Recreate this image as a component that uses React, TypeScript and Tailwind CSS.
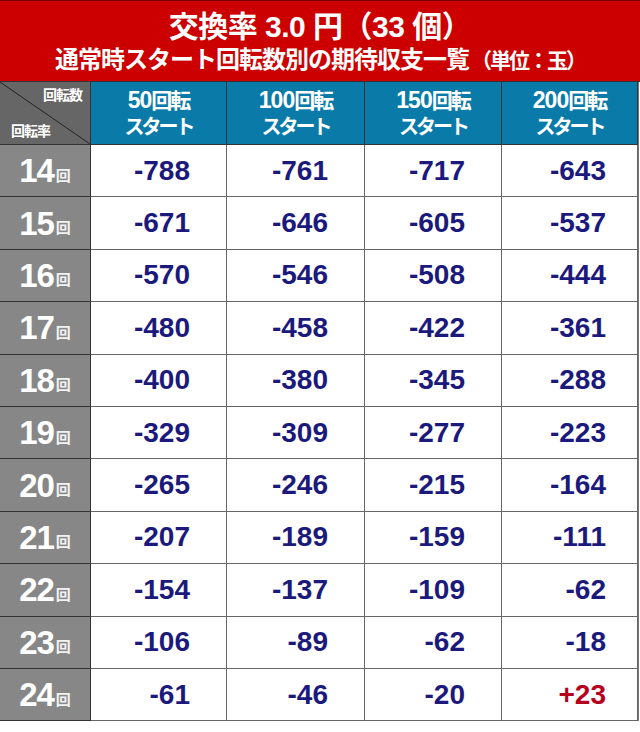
import React from 'react';

const jp = { fontFamily: '"Liberation Sans", "Noto Sans CJK JP", sans-serif' };

const cols = ['50', '100', '150', '200'];

const rows: { rate: number; values: number[] }[] = [
  { rate: 14, values: [-788, -761, -717, -643] },
  { rate: 15, values: [-671, -646, -605, -537] },
  { rate: 16, values: [-570, -546, -508, -444] },
  { rate: 17, values: [-480, -458, -422, -361] },
  { rate: 18, values: [-400, -380, -345, -288] },
  { rate: 19, values: [-329, -309, -277, -223] },
  { rate: 20, values: [-265, -246, -215, -164] },
  { rate: 21, values: [-207, -189, -159, -111] },
  { rate: 22, values: [-154, -137, -109, -62] },
  { rate: 23, values: [-106, -89, -62, -18] },
  { rate: 24, values: [-61, -46, -20, 23] },
];

const fmt = (v: number) => (v > 0 ? `+${v}` : `${v}`);

const App: React.FC = () => {
  return (
    <div className="w-[640px] h-[732px] bg-white" style={jp}>
      {/* Title */}
      <div className="h-[82px] bg-[#cc0000] border-t border-[#7a0000] border-b border-b-[#333] flex flex-col items-center pt-[8px] text-white font-bold">
        <div className="text-[30px] leading-[36px] tracking-[-0.5px]">
          交換率 3.0 円（33 個）
        </div>
        <div className="text-[24px] leading-[30px] tracking-[-1px] flex items-baseline">
          通常時スタート回転数別の期待収支一覧
          <span className="text-[21px] tracking-[-2px] ml-[2px]">（単位：玉）</span>
        </div>
      </div>

      <div className="grid grid-cols-[91px_136px_138px_137px_136px] border-r border-[#777] w-[639px]">
        {/* Header row */}
        <div className="relative h-[63px] bg-[#666] border-r border-b border-[#333] text-white font-bold text-[14px] leading-none">
          <svg className="absolute inset-0" width="90" height="62" viewBox="0 0 90 62">
            <line x1="0" y1="0" x2="90" y2="62" stroke="#222" strokeWidth="1" />
          </svg>
          <span className="absolute right-[8px] top-[6px] tracking-[-1px]">回転数</span>
          <span className="absolute left-[11px] bottom-[6px] tracking-[-1px]">回転率</span>
        </div>
        {cols.map((c) => (
          <div
            key={c}
            className="h-[63px] bg-[#0a7ba8] border-r border-b border-[#333] flex flex-col items-center justify-center text-white font-bold leading-none"
          >
            <div className="text-[23px] tracking-[-1px]">
              {c}
              <span className="text-[21px] tracking-[-2px]">回転</span>
            </div>
            <div className="text-[20px] tracking-[-3px] mt-[5px]">スタート</div>
          </div>
        ))}

        {/* Body */}
        {rows.map((r) => (
          <React.Fragment key={r.rate}>
            <div className="h-[52.4px] bg-[#878787] border-r border-b border-[#333] flex items-center justify-center text-white font-bold">
              <span className="text-[33px] leading-none tracking-[-1px]">{r.rate}</span>
              <span className="text-[15px] leading-none ml-[2px] mt-[9px] text-[#f2f2f2]">回</span>
            </div>
            {r.values.map((v, i) => (
              <div
                key={i}
                className={`h-[52.4px] border-r border-b border-[#666] flex items-center justify-end font-bold text-[28px] leading-none ${
                  i === 3 ? 'pr-[31px]' : 'pr-[36px]'
                } ${v > 0 ? 'text-[#b5001e]' : 'text-[#1b1a7c]'}`}
              >
                {fmt(v)}
              </div>
            ))}
          </React.Fragment>
        ))}
      </div>
    </div>
  );
};

export default App;
